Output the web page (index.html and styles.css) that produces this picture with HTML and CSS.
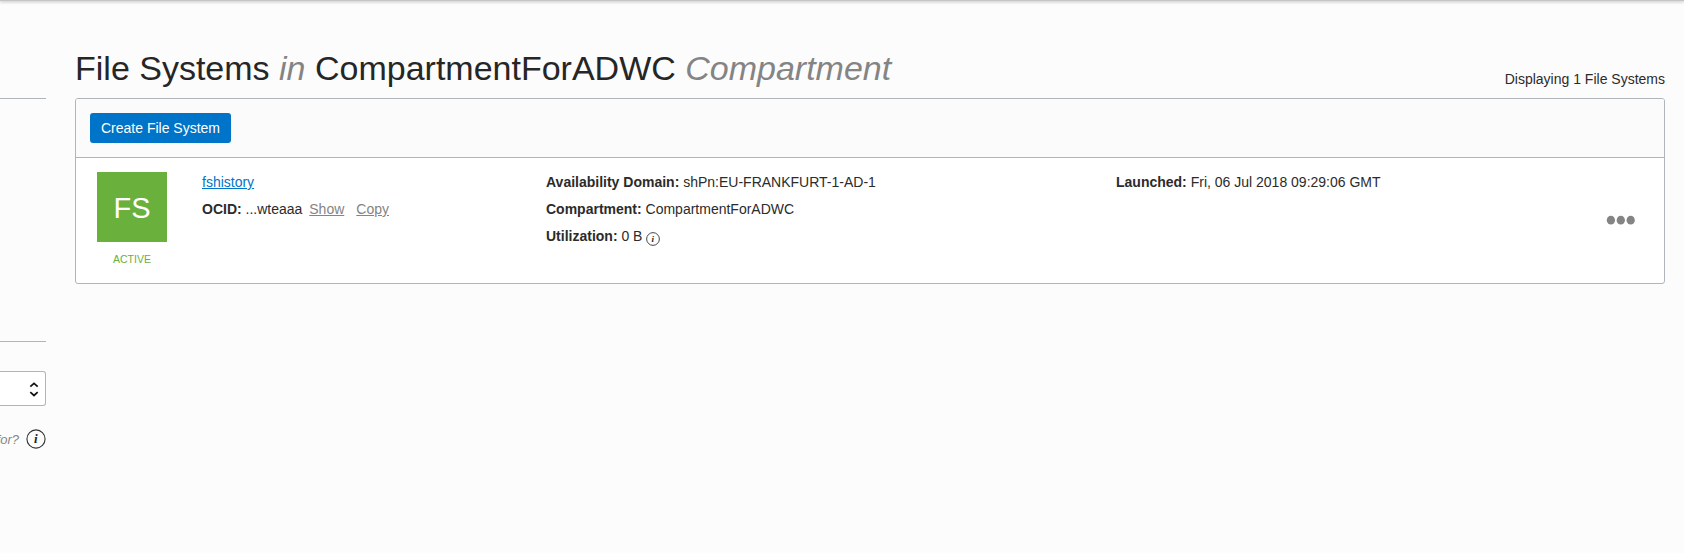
FILE: index.html
```html
<!DOCTYPE html>
<html lang="en">
<head>
<meta charset="utf-8">
<title>File Systems</title>
<link rel="stylesheet" href="styles.css">
</head>
<body>
<div class="topbar"></div>
<div class="layout">
  <aside class="sidebar">
    <div class="nav-section"></div>
    <div class="filter-section">
      <div class="select">
        <svg width="10" height="16" viewBox="0 0 10 16" fill="none" stroke="#111" stroke-width="1.7"><path d="M1.3 5.6 5 2.3l3.7 3.3M1.3 11.2 5 14.5l3.7-3.3"/></svg>
      </div>
      <div class="hint">
        <span>for?</span>
        <svg width="20" height="20" viewBox="0 0 20 20"><circle cx="10" cy="10" r="9.1" fill="none" stroke="#333" stroke-width="1.1"/><text class="glyph" x="9.8" y="14" text-anchor="middle">i</text></svg>
      </div>
    </div>
  </aside>
  <main class="content">
    <header class="heading">
      <h1>File Systems <em>in</em> CompartmentForADWC <em>Compartment</em></h1>
      <span class="count">Displaying 1 File Systems</span>
    </header>
    <section class="panel">
      <div class="toolbar"><button class="create">Create File System</button></div>
      <div class="row">
        <div class="status">
          <div class="badge">FS</div>
          <div class="state">ACTIVE</div>
        </div>
        <div class="col identity">
          <div><a class="name" href="#">fshistory</a></div>
          <div><b>OCID:</b> ...wteaaa <a class="action" href="#">Show</a><a class="action copy" href="#">Copy</a></div>
        </div>
        <div class="col placement">
          <div><b>Availability Domain:</b> shPn:EU-FRANKFURT-1-AD-1</div>
          <div><b>Compartment:</b> CompartmentForADWC</div>
          <div><b>Utilization:</b> 0 B <svg class="info" width="14" height="14" viewBox="0 0 20 20"><circle cx="10" cy="10" r="9.1" fill="none" stroke="#333" stroke-width="1.3"/><text class="glyph" x="9.8" y="14.2" text-anchor="middle">i</text></svg></div>
        </div>
        <div class="col launched">
          <div><b>Launched:</b> Fri, 06 Jul 2018 09:29:06 GMT</div>
        </div>
        <svg class="menu" width="30" height="10" viewBox="0 0 30 10" fill="#848484"><ellipse cx="4.9" cy="5.2" rx="4.1" ry="4.4"/><ellipse cx="14.8" cy="5.2" rx="4.1" ry="4.4"/><ellipse cx="24.7" cy="5.2" rx="4.1" ry="4.4"/></svg>
      </div>
    </section>
  </main>
</div>
</body>
</html>
```
FILE: styles.css
```css
* { box-sizing: border-box; }
body {
  margin: 0;
  height: 553px;
  overflow: hidden;
  background: #fcfcfc;
  color: #2b2b2b;
  font: 14px/27px "Liberation Sans", Arial, sans-serif;
}
.topbar { height: 1px; background: #c4c4c4; box-shadow: 0 1px 3px rgba(0, 0, 0, .4); }
.layout { display: flex; }
.sidebar { width: 46px; padding-top: 97px; flex: none; }
.nav-section { height: 243px; border-top: 1px solid #aeb5bd; }
.filter-section { border-top: 1px solid #aeb5bd; padding-top: 29px; }
.select {
  display: flex;
  align-items: center;
  justify-content: flex-end;
  height: 35px;
  padding: 1px 6px 0 0;
  border: 1px solid #aeb5bd;
  border-left: 0;
  border-radius: 0 3px 3px 0;
  background: #fff;
}
.hint {
  display: flex;
  align-items: center;
  justify-content: flex-end;
  gap: 7px;
  margin-top: 20px;
  color: #848484;
  font-size: 13px;
  font-style: italic;
}
.hint svg { flex: none; margin-top: -1px; }
.glyph { fill: #222; font: italic bold 13px "Liberation Serif", serif; }
.content { width: 1590px; margin-left: 29px; }
.heading { display: flex; justify-content: space-between; height: 97px; }
h1 { margin: 47px 0 0; color: #262626; font-size: 34px; font-weight: 400; line-height: 40px; }
h1 em { color: #848484; }
.count { margin-top: 65px; }
.panel { height: 186px; border: 1px solid #aeb5bd; border-radius: 3px; background: #fff; overflow: hidden; }
.toolbar { height: 59px; padding: 14px; border-bottom: 1px solid #aeb5bd; background: #fbfbfb; }
.create {
  display: block;
  width: 141px;
  height: 30px;
  padding: 0;
  border: 0;
  border-radius: 3px;
  background: #0074c8;
  color: #fff;
  font: 14px "Liberation Sans", Arial, sans-serif;
}
.row { display: flex; padding: 14px 28px 0 21px; }
.status { width: 70px; margin-right: 35px; text-align: center; }
.badge { height: 70px; background: #6ab03c; color: #fff; font-size: 29px; line-height: 72px; }
.state { margin-top: 4px; color: #6ab03c; font-size: 10.5px; }
.col { margin-top: -3px; }
.identity { width: 344px; }
.placement { width: 570px; }
.name { color: #0074c8; }
.action { margin-left: 3px; color: #848484; }
.copy { margin-left: 12px; }
.info { display: inline-block; vertical-align: -5px; }
.menu { margin: 43px 0 0 auto; }
```
